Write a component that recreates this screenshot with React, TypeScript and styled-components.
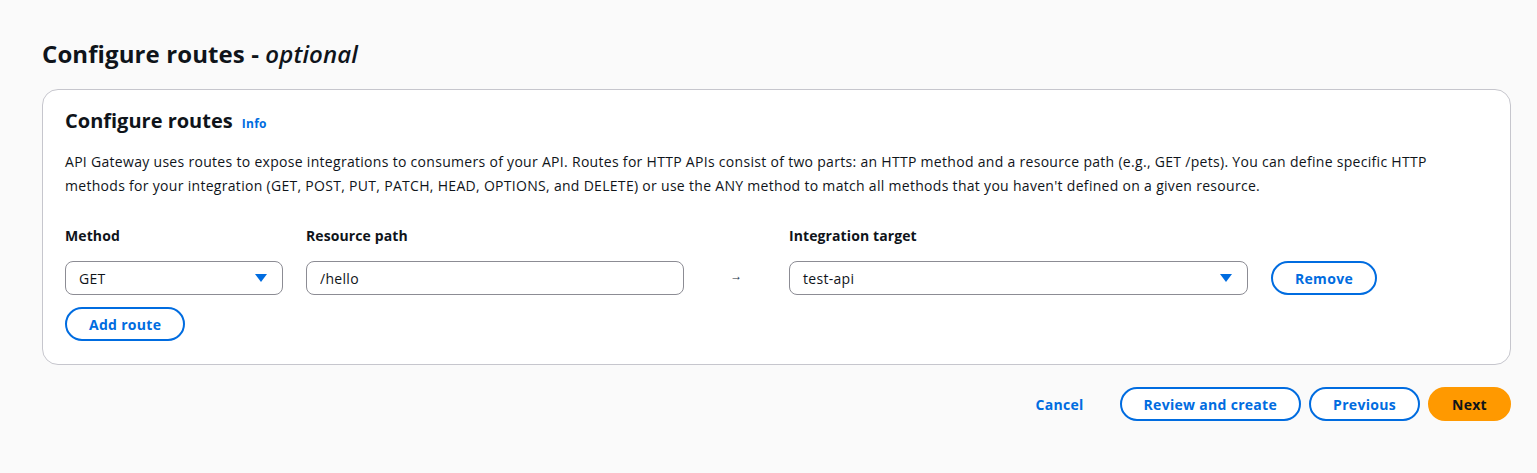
import React from "react";
import styled, { createGlobalStyle } from "styled-components";

const GlobalStyle = createGlobalStyle`
  html, body {
    margin: 0;
    padding: 0;
    background: #fafafa;
    font-family: "Open Sans", "Noto Sans", Arial, sans-serif;
    color: #0f141a;
  }
  * { box-sizing: border-box; }
`;

const Page = styled.div`
  padding: 38px 26px 40px 42px;
  letter-spacing: 0.3px;
`;

const PageTitle = styled.h1`
  margin: 0 0 19px;
  font-size: 24px;
  line-height: 32px;
  font-weight: 700;
  letter-spacing: 0.1px;
  em {
    font-weight: 600;
    font-style: italic;
  }
`;

const Card = styled.section`
  background: #ffffff;
  border: 1px solid #c6c6cd;
  border-radius: 16px;
  padding: 17px 22px 23px 22px;
`;

const CardHeader = styled.div`
  display: flex;
  align-items: baseline;
  gap: 9px;
  margin-bottom: 15px;
`;

const CardTitle = styled.h2`
  margin: 0;
  font-size: 20px;
  line-height: 28px;
  font-weight: 700;
  letter-spacing: 0;
`;

const InfoLink = styled.a`
  font-size: 12px;
  font-weight: 700;
  color: #006ce0;
  text-decoration: none;
`;

const Description = styled.p`
  margin: 0 0 28px;
  font-size: 14px;
  line-height: 24px;
  color: #0f141a;
`;

const RouteGrid = styled.div`
  display: grid;
  grid-template-columns: 218px 378px 59px 459px auto;
  column-gap: 23px;
  row-gap: 12px;
  align-items: center;
`;

const Label = styled.label`
  font-size: 14px;
  font-weight: 700;
  line-height: 20px;
  margin-bottom: 3px;
  letter-spacing: 0.1px;
`;

const fieldBase = `
  height: 34px;
  border: 1px solid #8c8c94;
  border-radius: 8px;
  background: #ffffff;
  font-family: inherit;
  font-size: 14px;
  letter-spacing: 0.3px;
  color: #0f141a;
  padding: 0 13px;
  display: flex;
  align-items: center;
`;

const Select = styled.div`
  ${fieldBase}
  justify-content: space-between;
  padding-right: 14px;
`;

const TextInput = styled.input`
  ${fieldBase}
  width: 100%;
  outline: none;
`;

const Caret = () => (
  <svg width="14" height="10" viewBox="0 0 14 10">
    <path d="M1 1 H13 L7 9 Z" fill="#006ce0" />
  </svg>
);

const Arrow = styled.span`
  font-size: 12px;
  color: #232f3e;
  text-align: center;
  margin-top: -6px;
`;

const Button = styled.button<{ $variant?: "normal" | "primary" | "link" }>`
  font-family: inherit;
  font-size: 14px;
  font-weight: 700;
  letter-spacing: 0.3px;
  height: 34px;
  border-radius: 20px;
  padding: 0 22px;
  cursor: pointer;
  white-space: nowrap;
  border: 2px solid
    ${(p) => (p.$variant === "primary" ? "#ff9900" : p.$variant === "link" ? "transparent" : "#006ce0")};
  background: ${(p) => (p.$variant === "primary" ? "#ff9900" : "#ffffff")};
  color: ${(p) => (p.$variant === "primary" ? "#0f141a" : "#006ce0")};
  ${(p) => p.$variant === "link" && "background: transparent; padding: 0 26px;"}
`;

const ButtonCell = styled.div`
  justify-self: start;
`;

const Footer = styled.div`
  display: flex;
  justify-content: flex-end;
  align-items: center;
  gap: 8px;
  margin-top: 22px;
`;

export default function App() {
  return (
    <>
      <GlobalStyle />
      <Page>
        <PageTitle>
          Configure routes - <em>optional</em>
        </PageTitle>
        <Card>
          <CardHeader>
            <CardTitle>Configure routes</CardTitle>
            <InfoLink href="#">Info</InfoLink>
          </CardHeader>
          <Description>
            API Gateway uses routes to expose integrations to consumers of your API. Routes for HTTP APIs
            consist of two parts: an HTTP method and a resource path (e.g., GET /pets). You can define
            specific HTTP methods for your integration (GET, POST, PUT, PATCH, HEAD, OPTIONS, and DELETE) or
            use the ANY method to match all methods that you haven't defined on a given resource.
          </Description>
          <RouteGrid>
            <Label>Method</Label>
            <Label>Resource path</Label>
            <span />
            <Label>Integration target</Label>
            <span />

            <Select>
              GET
              <Caret />
            </Select>
            <TextInput defaultValue="/hello" />
            <Arrow>→</Arrow>
            <Select>
              test-api
              <Caret />
            </Select>
            <ButtonCell>
              <Button>Remove</Button>
            </ButtonCell>

            <ButtonCell>
              <Button>Add route</Button>
            </ButtonCell>
          </RouteGrid>
        </Card>
        <Footer>
          <Button $variant="link">Cancel</Button>
          <Button>Review and create</Button>
          <Button>Previous</Button>
          <Button $variant="primary">Next</Button>
        </Footer>
      </Page>
    </>
  );
}
